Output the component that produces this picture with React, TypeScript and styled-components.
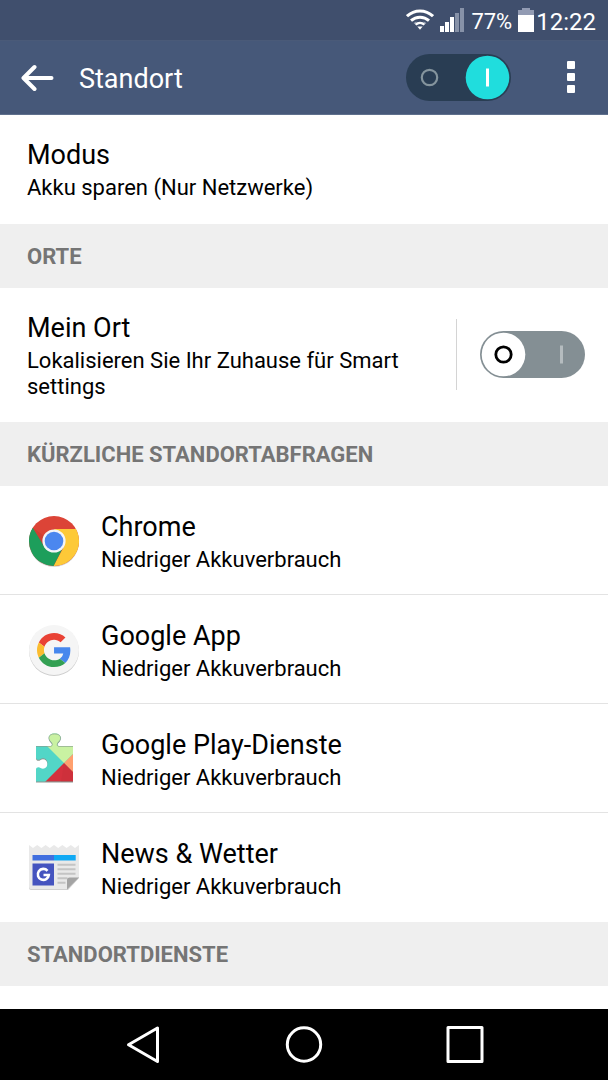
import React from "react";
import styled, { createGlobalStyle } from "styled-components";

const GlobalStyle = createGlobalStyle`
  * { box-sizing: border-box; }
  body { margin: 0; background: #fff; color: #000; font-family: Roboto, "Liberation Sans", sans-serif; }
  h1, h2, h3, p, ul { margin: 0; padding: 0; font-weight: 400; }
  svg { display: block; flex: none; }
`;

const Screen = styled.div`
  min-height: 100vh;
  display: flex;
  flex-direction: column;
`;

const StatusBar = styled.div`
  height: 40px;
  padding-right: 12px;
  display: flex;
  align-items: center;
  justify-content: flex-end;
  background: #404f6d;
  color: #fff;
`;

const StatusText = styled.span<{ $size: number }>`
  padding-top: 4px;
  font-size: ${(p) => p.$size}px;
  line-height: 28px;
`;

const StatusIcons = styled.span`
  display: flex;
  align-items: center;
  gap: 6px;
  margin-right: 2px;
`;

const Header = styled.header`
  height: 75px;
  padding: 0 20px 0 21px;
  display: flex;
  align-items: center;
  background: #465879;
  border-top: 1px solid #4a5a78;
  border-bottom: 1px solid #5f708d;
  color: #fff;
`;

const IconButton = styled.button`
  padding: 0;
  border: 0;
  background: none;
  color: inherit;
  cursor: pointer;
`;

const PageTitle = styled.h1`
  flex: 1;
  margin-left: 25px;
  padding-top: 2px;
  font-size: 27px;
  line-height: 32px;
`;

const MenuButton = styled(IconButton)`
  margin-left: 44px;
`;

const SwitchLabel = styled.label`
  position: relative;
  display: block;
  flex: none;
  cursor: pointer;
`;

const SwitchInput = styled.input`
  position: absolute;
  inset: 0;
  width: 100%;
  height: 100%;
  margin: 0;
  opacity: 0;
  cursor: pointer;
`;

const Content = styled.main`
  flex: 1;
  background: #fff;
`;

const SectionTitle = styled.h2`
  height: 64px;
  padding: 1px 27px 0;
  display: flex;
  align-items: center;
  background: #efefef;
  color: #757575;
  font-size: 22px;
  font-weight: 700;
  line-height: 26px;
`;

const Row = styled.section`
  min-height: 109px;
  padding: 23px 23px 22px 27px;
  display: flex;
  align-items: flex-start;
`;

const List = styled.ul`
  list-style: none;
`;

const AppRow = styled.li`
  min-height: 109px;
  padding: 24px 27px 22px;
  display: flex;
  align-items: flex-start;
  gap: 20px;

  &:not(:last-child) {
    box-shadow: inset 0 -1px #e3e3e3;
  }

  > svg {
    margin-top: 4px;
  }
`;

const RowText = styled.div`
  flex: 1;
`;

const RowTitle = styled.h3`
  font-size: 27px;
  line-height: 34px;
`;

const RowSummary = styled.p`
  padding-top: 3px;
  font-size: 22px;
  line-height: 26px;
`;

const SwitchArea = styled.div`
  height: 71px;
  margin-top: 8px;
  margin-left: 24px;
  padding-left: 23px;
  display: flex;
  align-items: center;
  border-left: 1px solid #d4d4d4;
`;

const NavBar = styled.nav`
  height: 71px;
  display: flex;
  align-items: center;
  justify-content: center;
  gap: 121px;
  background: #000;
  color: #fff;
`;

function Switch({ label, initial, dark }: { label: string; initial: boolean; dark?: boolean }) {
  const [on, setOn] = React.useState(initial);
  return (
    <SwitchLabel>
      <SwitchInput
        type="checkbox"
        role="switch"
        aria-label={label}
        checked={on}
        onChange={(e) => setOn(e.target.checked)}
      />
      <svg width="105" height="47" viewBox="0 0 105 47" aria-hidden="true">
        <rect width="105" height="47" rx="23.5" fill={dark ? "#293d53" : "#848f94"} />
        <circle cx={on ? 81.5 : 23.5} cy="23.5" r="21.8" fill={on ? "#20dddd" : "#fff"} />
        <circle
          cx="23.5"
          cy="23.5"
          r="7.7"
          fill="none"
          stroke={on ? "#84949d" : "#000"}
          strokeWidth={on ? 2.2 : 2.8}
        />
        <path d="M81.5 14.500v18" stroke={on ? "#fff" : "#b5bcbf"} strokeWidth="3" />
      </svg>
    </SwitchLabel>
  );
}

const WifiIcon = () => (
  <svg width="28" height="22" viewBox="0 0 28 22" fill="none" stroke="#fff" strokeWidth="3">
    <path d="M1 7.2C8.500 .2 19.500 .2 27 7.200M5 11.600c5.200-4.600 12.800-4.600 18 0" />
    <path d="M9.500 15.600c2.600-2.300 6.400-2.300 9 0" strokeWidth="2.500" />
    <path d="M11.300 17.500h5.400L14 20.800z" fill="#fff" stroke="none" />
    <path d="M8 14.500l2.500-1.600M20 14.500l-2.500-1.600" stroke="#9aa3b5" strokeWidth="1.200" />
  </svg>
);

const SignalIcon = () => (
  <svg width="25" height="24" viewBox="0 0 25 24" fill="#fff">
    <path d="M0 18h4v6H0zM5 14h4v10H5zM10 9h4v15h-4z" />
    <path d="M15 5h4v19h-4zM20 0h4v24h-4z" fill="#8792a8" />
  </svg>
);

const BatteryIcon = () => (
  <svg width="16" height="24" viewBox="0 0 16 24">
    <path d="M4 0h8v2h4v5H0V2h4z" fill="#929bb3" />
    <path d="M0 7h16v17H0z" fill="#fff" />
  </svg>
);

const BackArrow = () => (
  <svg width="33" height="28" viewBox="0 0 33 28" fill="none" stroke="#fff" strokeWidth="4" strokeLinecap="round" strokeLinejoin="round">
    <path d="M30.500 14H3M13.500 3L2.500 14l11 11" />
  </svg>
);

const MoreIcon = () => (
  <svg width="33" height="34" viewBox="0 0 33 34" fill="#fff">
    <rect x="12" y="0" width="8" height="8" rx="1" />
    <rect x="12" y="12" width="8" height="8" rx="1" />
    <rect x="12" y="24" width="8" height="8" rx="1" />
  </svg>
);

const ChromeIcon = () => (
  <svg width="54" height="54" viewBox="0 0 54 54">
    <circle cx="27" cy="28" r="25" fill="#d5d5d5" />
    <circle cx="27" cy="27" r="25" fill="#dc4437" />
    <path d="M27 15H49A25 25 0 0 1 26.500 52L37 32.500z" fill="#fdc938" />
    <path d="M5.800 13.700A25 25 0 0 0 26.500 52l10-19.500L27 38l-9.500-5.500z" fill="#1d9e5b" />
    <path d="M5.800 13.700l11 18.800 1-10z" fill="#c33a2e" opacity=".5" />
    <circle cx="27" cy="27" r="11.600" fill="#f4f5f7" />
    <circle cx="27" cy="27" r="9.300" fill="#4b87ef" />
  </svg>
);

const GoogleIcon = () => (
  <svg width="54" height="54" viewBox="0 0 54 54">
    <circle cx="27" cy="28" r="25" fill="#cdcdcd" />
    <circle cx="27" cy="27" r="25" fill="#f5f5f5" />
    <g transform="translate(10 10) scale(.71)">
      <path fill="#e94235" d="M24 9.500c3.540 0 6.710 1.220 9.210 3.600l6.850-6.850C35.900 2.380 30.470 0 24 0 14.620 0 6.510 5.380 2.560 13.220l7.980 6.190C12.430 13.720 17.740 9.500 24 9.500z" />
      <path fill="#4787ed" d="M46.980 24.550c0-1.570-.15-3.090-.38-4.550H24v9.020h12.940c-.58 2.960-2.260 5.480-4.780 7.180l7.730 6c4.510-4.180 7.090-10.360 7.090-17.650z" />
      <path fill="#fbbc2f" d="M10.530 28.590c-.48-1.450-.76-2.990-.76-4.590s.27-3.140.76-4.590l-7.980-6.190C.92 16.460 0 20.120 0 24c0 3.880.92 7.540 2.560 10.780l7.970-6.190z" />
      <path fill="#34a053" d="M24 48c6.480 0 11.930-2.130 15.890-5.810l-7.730-6c-2.150 1.450-4.920 2.300-8.160 2.300-6.260 0-11.570-4.220-13.470-9.910l-7.980 6.190C6.510 42.620 14.620 48 24 48z" />
    </g>
  </svg>
);

const puzzle =
  "M9 14H23.500C26 14 25.500 11.500 24 10C20.500 7 21 1.500 27.700 1.500S35 7 31.500 10C30 11.500 29.500 14 32 14H46V49.500H9V37.500C9 35 12 34.500 13.500 36C17 38 20.500 35.500 20.500 31.500S17 25 13.500 27C12 28.500 9 28 9 25.500z";

const PlayServicesIcon = () => (
  <svg width="54" height="54" viewBox="0 0 54 54">
    <clipPath id="piece">
      <path d={puzzle} />
    </clipPath>
    <path d={puzzle} transform="translate(0 1)" fill="#8d9690" />
    <g clipPath="url(#piece)">
      <path d="M0 0h54v54H0z" fill="#52d6c7" />
      <path d="M21 0h33v14L37 31 20 14z" fill="#c9f2a2" />
      <path d="M37 31L54 14v35z" fill="#ffa06e" />
      <path d="M37 31L17 51h37V48z" fill="#d4313d" />
      <path d="M37 31l9 9v10H34z" fill="#ba2b35" opacity=".2" />
    </g>
    <path d="M9 14.500H23.500C26 14 25.500 11.500 24 10C20.500 7 21 2 27.700 2S35 7 31.500 10C30 11.500 29.500 14.500 32 14.500H46" fill="none" stroke="#86998c" opacity=".6" />
  </svg>
);

const NewsIcon = () => (
  <svg width="54" height="54" viewBox="0 0 54 54">
    <path d="M2 5l4 3 4.200-3 4.200 3 4.200-3 4.200 3L27 5l4.200 3 4.200-3 4.200 3 4.200-3 4.200 3L52 5v32L41 49H4a2 2 0 0 1-2-2z" fill="#d0d0d0" />
    <path d="M2 4l4 3 4.200-3 4.200 3 4.200-3 4.200 3L27 4l4.200 3 4.200-3 4.200 3 4.200-3 4.200 3L52 4v32L40 48H4a2 2 0 0 1-2-2z" fill="#e9e9e9" />
    <path d="M5.500 14H27v5.500H5.500z" fill="#416fdf" />
    <path d="M27 14h21.700v5.500H27z" fill="#10a9f4" />
    <path d="M5.500 22.500H27v22H5.500z" fill="#4554bf" />
    <path d="M20.500 29.800A5.500 5.500 0 1 0 21.800 34H16.500" fill="none" stroke="#fff" strokeWidth="2.600" />
    <path d="M30.500 23.700h18M30.500 28.200h18M30.500 32.700h18M30.500 37.200h10M30.500 41.700h8" stroke="#c4c4c4" strokeWidth="1.900" />
    <path d="M40 48.500L52 36.500H42.500a2.500 2.500 0 0 0-2.500 2.500z" fill="#a4a4a4" />
  </svg>
);

const apps = [
  { name: "Chrome", Icon: ChromeIcon },
  { name: "Google App", Icon: GoogleIcon },
  { name: "Google Play-Dienste", Icon: PlayServicesIcon },
  { name: "News & Wetter", Icon: NewsIcon },
];

export default function App() {
  return (
    <Screen>
      <GlobalStyle />
      <StatusBar>
        <StatusIcons>
          <WifiIcon />
          <SignalIcon />
          <StatusText $size={22}>77%</StatusText>
          <BatteryIcon />
        </StatusIcons>
        <StatusText $size={24}>12:22</StatusText>
      </StatusBar>
      <Header>
        <IconButton aria-label="Zurück">
          <BackArrow />
        </IconButton>
        <PageTitle>Standort</PageTitle>
        <Switch label="Standort" initial dark />
        <MenuButton aria-label="Weitere Optionen">
          <MoreIcon />
        </MenuButton>
      </Header>
      <Content>
        <Row>
          <RowText>
            <RowTitle>Modus</RowTitle>
            <RowSummary>Akku sparen (Nur Netzwerke)</RowSummary>
          </RowText>
        </Row>
        <SectionTitle>ORTE</SectionTitle>
        <Row>
          <RowText>
            <RowTitle>Mein Ort</RowTitle>
            <RowSummary>Lokalisieren Sie Ihr Zuhause für Smart settings</RowSummary>
          </RowText>
          <SwitchArea>
            <Switch label="Mein Ort" initial={false} />
          </SwitchArea>
        </Row>
        <SectionTitle>KÜRZLICHE STANDORTABFRAGEN</SectionTitle>
        <List>
          {apps.map(({ name, Icon }) => (
            <AppRow key={name}>
              <Icon />
              <RowText>
                <RowTitle>{name}</RowTitle>
                <RowSummary>Niedriger Akkuverbrauch</RowSummary>
              </RowText>
            </AppRow>
          ))}
        </List>
        <SectionTitle>STANDORTDIENSTE</SectionTitle>
      </Content>
      <NavBar>
        <IconButton aria-label="Zurück">
          <svg width="40" height="40" viewBox="0 0 40 40" fill="none" stroke="#fff" strokeWidth="3" strokeLinejoin="round">
            <path d="M34.500 3v33.500L5.500 19.700z" />
          </svg>
        </IconButton>
        <IconButton aria-label="Startseite">
          <svg width="40" height="40" viewBox="0 0 40 40" fill="none" stroke="#fff" strokeWidth="3">
            <circle cx="20" cy="19.500" r="16.700" />
          </svg>
        </IconButton>
        <IconButton aria-label="Letzte Apps">
          <svg width="40" height="40" viewBox="0 0 40 40" fill="none" stroke="#fff" strokeWidth="3" strokeLinejoin="round">
            <path d="M3 2.500h34v34H3z" />
          </svg>
        </IconButton>
      </NavBar>
    </Screen>
  );
}
